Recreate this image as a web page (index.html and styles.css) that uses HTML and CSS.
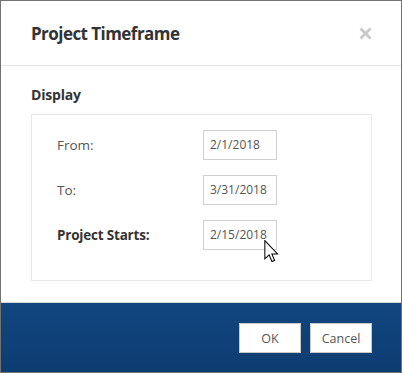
FILE: index.html
```html
<!DOCTYPE html>
<html>
<head>
<meta charset="utf-8">
<link rel="stylesheet" href="styles.css">
</head>
<body>
<div class="dialog">
  <div class="header">
    <h1 class="title">Project Timeframe</h1>
    <svg class="close" width="13" height="13" viewBox="0 0 13 13">
      <path d="M1.5 1.5 L11.5 11.5 M11.5 1.5 L1.5 11.5" stroke="#c9c9c9" stroke-width="2.8" stroke-linecap="butt"/>
    </svg>
  </div>
  <div class="content">
    <h2 class="section">Display</h2>
    <div class="box">
      <div class="row">
        <span class="label">From:</span>
        <span class="field">2/1/2018</span>
      </div>
      <div class="row">
        <span class="label">To:</span>
        <span class="field">3/31/2018</span>
      </div>
      <div class="row">
        <span class="label strong">Project Starts:</span>
        <span class="field">2/15/2018
          <svg class="cursor" width="15" height="23" viewBox="0 0 12 19">
            <path d="M0.5 0.5 L0.5 15.5 L4 12.2 L6.4 17.8 L8.6 16.9 L6.3 11.5 L11 11.5 Z" fill="#fff" stroke="#000" stroke-width="0.85" stroke-linejoin="miter"/>
          </svg>
        </span>
      </div>
    </div>
  </div>
  <div class="footer">
    <span class="btn">OK</span>
    <span class="btn">Cancel</span>
  </div>
</div>
</body>
</html>
```
FILE: styles.css
```css
html, body {
  margin: 0;
  padding: 0;
}
body {
  background: #727272;
  width: 402px;
  height: 373px;
  overflow: hidden;
  font-family: "Open Sans", "Noto Sans", sans-serif;
}
.dialog {
  margin: 1px;
  width: 400px;
  height: 371px;
  background: #fff;
  display: flex;
  flex-direction: column;
}
.header {
  height: 64px;
  border-bottom: 1px solid #e6e6e6;
  display: flex;
  align-items: center;
  justify-content: space-between;
  padding: 0 29px 0 30px;
}
.title {
  margin: 0;
  font-size: 17px;
  font-weight: 700;
  color: #333;
  letter-spacing: -0.55px;
}
.close {
  display: block;
  margin-top: 1px;
}
.content {
  flex: 1;
  padding: 0 29px 0 30px;
}
.section {
  margin: 19px 0 9px;
  font-size: 14px;
  font-weight: 700;
  color: #333;
  line-height: 20px;
  letter-spacing: -0.2px;
}
.box {
  border: 1px solid #e8e8e8;
  padding: 15px 0 30px 25px;
  display: flex;
  flex-direction: column;
  gap: 15px;
}
.row {
  display: flex;
  align-items: center;
  height: 30px;
}
.label {
  width: 146px;
  font-size: 13.5px;
  color: #555;
}
.label.strong {
  font-weight: 700;
  color: #333;
  letter-spacing: -0.2px;
}
.field {
  position: relative;
  box-sizing: border-box;
  width: 74px;
  height: 30px;
  border: 1px solid #cfcfcf;
  padding: 0 0 0 6px;
  font-size: 12px;
  line-height: 28px;
  color: #555;
}
.cursor {
  position: absolute;
  left: 60px;
  top: 19px;
}
.footer {
  height: 70px;
  box-sizing: border-box;
  border-top: 1px solid #d4d8de;
  background: linear-gradient(#11467f, #0d3c71);
  display: flex;
  justify-content: flex-end;
  align-items: flex-start;
  gap: 9px;
  padding: 20px 29px 0 0;
}
.btn {
  box-sizing: border-box;
  width: 62px;
  height: 30px;
  background: #fff;
  border: 1px solid #c8c8c8;
  font-size: 12.5px;
  color: #555;
  display: flex;
  align-items: center;
  justify-content: center;
}
```
